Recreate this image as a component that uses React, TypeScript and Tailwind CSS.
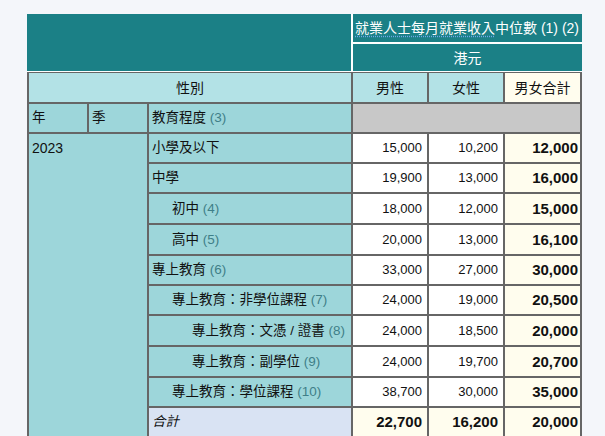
import React from 'react';

type Row = {
  label: string;
  indent: 0 | 1 | 2;
  note?: string;
  male: string;
  female: string;
  total: string;
  h: string;
};

const rows: Row[] = [
  { label: '小學及以下', indent: 0, male: '15,000', female: '10,200', total: '12,000', h: 'h-[30px]' },
  { label: '中學', indent: 0, male: '19,900', female: '13,000', total: '16,000', h: 'h-[30px]' },
  { label: '初中', indent: 1, note: '(4)', male: '18,000', female: '12,000', total: '15,000', h: 'h-[31px]' },
  { label: '高中', indent: 1, note: '(5)', male: '20,000', female: '13,000', total: '16,100', h: 'h-[31px]' },
  { label: '專上教育', indent: 0, note: '(6)', male: '33,000', female: '27,000', total: '30,000', h: 'h-[30px]' },
  { label: '專上教育：非學位課程', indent: 1, note: '(7)', male: '24,000', female: '19,000', total: '20,500', h: 'h-[30px]' },
  { label: '專上教育：文憑 / 證書', indent: 2, note: '(8)', male: '24,000', female: '18,500', total: '20,000', h: 'h-[31px]' },
  { label: '專上教育：副學位', indent: 2, note: '(9)', male: '24,000', female: '19,700', total: '20,700', h: 'h-[31px]' },
  { label: '專上教育：學位課程', indent: 1, note: '(10)', male: '38,700', female: '30,000', total: '35,000', h: 'h-[30px]' },
];

const indentClass = ['pl-[3px]', 'pl-[23px]', 'pl-[43px]'];

// shared cell borders
const cell = 'border-r-2 border-b-2 border-[#666666] p-0';
const note = 'text-[#3f7f88]';

export default function App() {
  return (
    <div
      className="min-h-[436px] w-[605px] bg-[#f4f6fa] pt-[14px] pl-[27px] text-[#111111]"
      style={{ fontFamily: '"Liberation Sans", "Noto Sans CJK TC", sans-serif' }}
    >
      <table className="w-[555px] table-fixed border-separate border-spacing-0 text-[13.5px] leading-5">
        <colgroup>
          <col className="w-[62px]" />
          <col className="w-[60px]" />
          <col className="w-[204px]" />
          <col className="w-[76px]" />
          <col className="w-[76px]" />
          <col className="w-[77px]" />
        </colgroup>
        <thead>
          <tr>
            <th
              rowSpan={2}
              colSpan={3}
              className="border-r-2 border-b border-white bg-[#1b8086] p-0"
            />
            <th
              colSpan={3}
              className="h-[30px] border-b-2 border-white bg-[#1b8086] p-0 pl-[2px] text-left text-[14px] font-normal text-white"
            >
              <span className="underline decoration-[#6fa8e8] decoration-dotted underline-offset-[3px]">
                就業人士每月就業收入
              </span>
              中位數 (1) (2)
            </th>
          </tr>
          <tr>
            <th
              colSpan={3}
              className="h-[28px] border-b border-white bg-[#1b8086] p-0 text-center text-[14px] font-normal text-white"
            >
              港元
            </th>
          </tr>
          <tr>
            <th
              colSpan={3}
              className={`${cell} h-[32px] border-t border-l-2 bg-[#b3e2e6] text-center text-[14px] font-normal`}
            >
              性別
            </th>
            <th className={`${cell} border-t bg-[#b3e2e6] text-center text-[14px] font-normal`}>男性</th>
            <th className={`${cell} border-t bg-[#b3e2e6] text-center text-[14px] font-normal`}>女性</th>
            <th className={`${cell} border-t bg-[#fffdee] text-center text-[14px] font-normal`}>男女合計</th>
          </tr>
          <tr>
            <th className={`${cell} h-[30px] border-l-2 bg-[#9dd6da] pl-[3px] text-left font-normal`}>年</th>
            <th className={`${cell} bg-[#9dd6da] pl-[3px] text-left font-normal`}>季</th>
            <th className={`${cell} bg-[#9dd6da] pl-[3px] text-left font-normal`}>
              教育程度 <span className={note}>(3)</span>
            </th>
            <th colSpan={3} className={`${cell} bg-[#c8c8c8]`} />
          </tr>
        </thead>
        <tbody>
          {rows.map((r, i) => (
            <tr key={r.label}>
              {i === 0 && (
                <td
                  rowSpan={rows.length + 1}
                  colSpan={2}
                  className={`${cell} border-l-2 bg-[#9dd6da] pt-[4px] pl-[3px] align-top text-[14px]`}
                >
                  2023
                </td>
              )}
              <td className={`${cell} ${r.h} ${indentClass[r.indent]} bg-[#9dd6da] whitespace-nowrap`}>
                {r.label}
                {r.note && <span className={note}> {r.note}</span>}
              </td>
              <td className={`${cell} bg-white pr-[5px] text-right text-[13px]`}>{r.male}</td>
              <td className={`${cell} bg-white pr-[5px] text-right text-[13px]`}>{r.female}</td>
              <td className={`${cell} bg-[#fffdee] pr-[2px] text-right text-[15px] font-bold`}>{r.total}</td>
            </tr>
          ))}
          <tr>
            <td className={`${cell} h-[30px] bg-[#d9e3f3] pl-[3px] italic`}>合計</td>
            <td className={`${cell} bg-[#fffdee] pr-[5px] text-right text-[15px] font-bold`}>22,700</td>
            <td className={`${cell} bg-[#fffdee] pr-[5px] text-right text-[15px] font-bold`}>16,200</td>
            <td className={`${cell} bg-[#fffdee] pr-[2px] text-right text-[15px] font-bold`}>20,000</td>
          </tr>
        </tbody>
      </table>
    </div>
  );
}
